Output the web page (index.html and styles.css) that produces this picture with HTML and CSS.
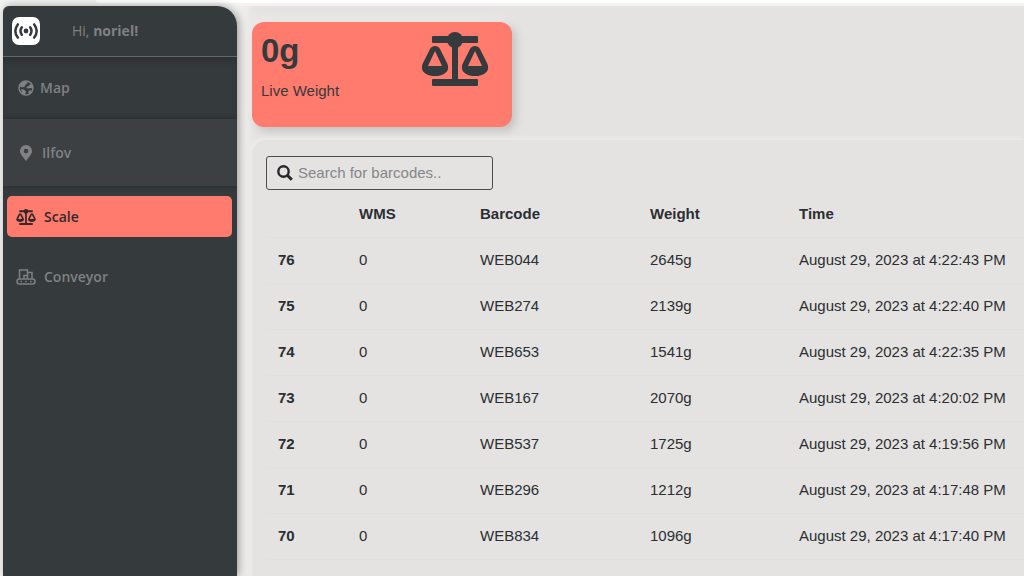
FILE: index.html
```
<!DOCTYPE html>
<html lang="en">
<head>
    <meta charset="UTF-8">
    <title>Scale</title>
    <link rel="stylesheet" href="styles.css">
</head>
<body>
<svg class="sprite" aria-hidden="true">
    <symbol id="balance" viewBox="0 0 68 54">
        <rect x="11" y="4" width="46" height="7" rx="1"/>
        <rect x="11" y="47" width="46" height="7" rx="1"/>
        <rect x="31" y="8" width="6" height="42"/>
        <circle cx="34" cy="8" r="8"/>
        <path fill-rule="evenodd" d="M14 14c2 0 4 1 5 3l7 14c4 8-3 13-12 13S-2 39 2 31l7-14c1-2 3-3 5-3zM14 19L7 34h14z"/>
        <path fill-rule="evenodd" d="M54 14c2 0 4 1 5 3l7 14c4 8-3 13-12 13s-16-5-12-13l7-14c1-2 3-3 5-3zM54 19l-7 15h14z"/>
    </symbol>
</svg>
<div class="topbar"><div class="tab"></div></div>
<div class="app">
    <aside class="sidebar">
        <header class="user">
            <svg class="logo" viewBox="0 0 28 28">
                <rect width="28" height="28" rx="7" fill="#fff"/>
                <circle cx="14" cy="14" r="2.4" fill="#35393d"/>
                <path d="M9.8 10.2Q7.2 14 9.8 17.8M18.2 10.2Q20.8 14 18.2 17.8M5.8 7.4Q0.8 14 5.8 20.6M22.2 7.4Q27.2 14 22.2 20.6" fill="none" stroke="#35393d" stroke-width="2.5" stroke-linecap="round"/>
            </svg>
            <p class="hello">Hi, <b>noriel!</b></p>
        </header>
        <nav class="menu">
            <a class="item map" href="#">
                <svg width="16" height="16" viewBox="0 0 16 16">
                    <circle cx="8" cy="8" r="7" fill="none" stroke="currentColor" stroke-width="1.4"/>
                    <path fill="currentColor" d="M8 1L10 3 7.500 4.500 7 6.500 4 7.500 2 6.500 1 9 1 5 4 2zM15 6L12.500 4 10.500 6 8 7.500 10 8.500 13 8 15 9zM3 9L6 9.500 8 11.500 7 15 4 13.500zM11 10.500L14 10.500 12 13.500 10 13.500z"/>
                </svg>
                Map
            </a>
            <a class="item place" href="#">
                <svg width="16" height="16" viewBox="0 0 16 16">
                    <path fill="currentColor" fill-rule="evenodd" d="M8 0a6 6 0 0 1 6 6c0 3-3 6-6 10C5 12 2 9 2 6a6 6 0 0 1 6-6zM8 3.800a2.300 2.300 0 1 0 0 4.600a2.300 2.300 0 0 0 0-4.600z"/>
                </svg>
                Ilfov
            </a>
            <a class="item active" href="#">
                <svg width="20" height="16" fill="currentColor"><use href="#balance"/></svg>
                Scale
            </a>
            <a class="item conveyor" href="#">
                <svg width="20" height="16" viewBox="0 0 20 16" fill="none" stroke="currentColor" stroke-width="1.500">
                    <path d="M3.500 9.500V1h8v8.500M11.500 3.500h4.500v6M8 9.500V6.500h3.500"/>
                    <rect x="1" y="10" width="18" height="5" rx="2.500"/>
                    <path d="M4.500 12.500h1.500M9.200 12.500h1.500M14 12.500h1.500"/>
                </svg>
                Conveyor
            </a>
        </nav>
    </aside>
    <main class="content">
        <section class="card">
            <div>
                <h1>0g</h1>
                <p>Live Weight</p>
            </div>
            <svg width="68" height="54"><use href="#balance"/></svg>
        </section>
        <section class="panel">
            <label class="search">
                <svg width="16" height="16" viewBox="0 0 16 16" fill="none" stroke="#24272b">
                    <circle cx="6.500" cy="6.500" r="5.200" stroke-width="2.400"/>
                    <path d="M10.300 10.300l4.500 4.500" stroke-width="3"/>
                </svg>
                <input type="search" placeholder="Search for barcodes.." aria-label="Search for barcodes">
            </label>
            <table>
                <thead>
                    <tr><th class="id"></th><th class="wms">WMS</th><th class="barcode">Barcode</th><th class="weight">Weight</th><th>Time</th></tr>
                </thead>
                <tbody>
                    <tr><th>76</th><td>0</td><td>WEB044</td><td>2645g</td><td>August 29, 2023 at 4:22:43 PM</td></tr>
                    <tr><th>75</th><td>0</td><td>WEB274</td><td>2139g</td><td>August 29, 2023 at 4:22:40 PM</td></tr>
                    <tr><th>74</th><td>0</td><td>WEB653</td><td>1541g</td><td>August 29, 2023 at 4:22:35 PM</td></tr>
                    <tr><th>73</th><td>0</td><td>WEB167</td><td>2070g</td><td>August 29, 2023 at 4:20:02 PM</td></tr>
                    <tr><th>72</th><td>0</td><td>WEB537</td><td>1725g</td><td>August 29, 2023 at 4:19:56 PM</td></tr>
                    <tr><th>71</th><td>0</td><td>WEB296</td><td>1212g</td><td>August 29, 2023 at 4:17:48 PM</td></tr>
                    <tr><th>70</th><td>0</td><td>WEB834</td><td>1096g</td><td>August 29, 2023 at 4:17:40 PM</td></tr>
                    <tr><th>69</th><td>0</td><td>WEB204</td><td>793g</td><td>August 29, 2023 at 4:17:37 PM</td></tr>
                </tbody>
            </table>
        </section>
    </main>
</div>
</body>
</html>
```
FILE: styles.css
```
*{
    box-sizing: border-box;
    margin: 0;
    padding: 0;
}
body{
    display: flex;
    flex-direction: column;
    height: 100vh;
    overflow: hidden;
    background: #f3f3f2;
    color: #2b2e32;
    font: 15px/22px "Liberation Sans", Arial, sans-serif;
}
.sprite{
    display: none;
}
.topbar{
    flex: none;
    height: 6px;
    padding-left: 96px;
}
.tab{
    height: 3px;
    background: #fff;
    border-bottom-left-radius: 4px;
}
.app{
    display: flex;
    flex: 1;
    min-height: 0;
    padding-left: 3px;
}
.sidebar{
    z-index: 1;
    flex: none;
    width: 234px;
    border-radius: 6px 20px 0 0;
    background: #353a3d;
    box-shadow: 2px 0 8px rgba(0, 0, 0, .35);
    color: #7f8182;
    font: 14px/22px "Open Sans", "Noto Sans", sans-serif;
    overflow: hidden;
}
.user{
    display: flex;
    align-items: center;
    gap: 32px;
    height: 51px;
    padding: 0 9px;
    border-bottom: 1px solid #66696c;
}
.logo{
    width: 28px;
    height: 28px;
}
.item{
    display: flex;
    align-items: center;
    gap: 8px;
    color: inherit;
    font-weight: 600;
    text-decoration: none;
}
.map{
    height: 62px;
    padding-left: 15px;
    box-shadow: inset 0 6px 8px -4px #292c30;
    gap: 6px;
}
.place{
    height: 67px;
    padding-left: 15px;
    background: #3c4043;
    box-shadow: 0 0 4px #222529;
}
.active{
    height: 41px;
    margin: 10px 5px 19px 4px;
    padding-left: 9px;
    border-radius: 5px;
    background: #ff7b6e;
    color: #35292a;
}
.conveyor{
    height: 42px;
    padding-left: 13px;
}
.content{
    flex: 1;
    min-width: 0;
    padding: 16px 0 0 15px;
    background: #e4e3e1;
    box-shadow: inset 18px 0 10px -6px #f0efed;
}
.card{
    display: flex;
    justify-content: space-between;
    width: 260px;
    height: 105px;
    padding: 10px 23px 0 9px;
    border-radius: 12px;
    background: #ff7b6e;
    box-shadow: 4px 4px 8px #c3c2c0, -4px -4px 8px #edecea;
    color: #353a3d;
    fill: #353a3d;
}
.card h1{
    margin-bottom: 10px;
    font-size: 33px;
    line-height: 38px;
}
.panel{
    margin-top: 13px;
    padding: 16px 0 0 14px;
    border-radius: 14px 0 0 0;
    background: #e4e3e1;
    box-shadow: -2px -2px 4px #edecea;
}
.search{
    display: flex;
    align-items: center;
    gap: 5px;
    width: 227px;
    height: 34px;
    margin-bottom: 1px;
    padding: 0 10px;
    border: 1px solid #4b4d50;
    border-radius: 3px;
}
.search input{
    flex: 1;
    min-width: 0;
    border: 0;
    outline: 0;
    background: none;
    font: inherit;
}
.search input::placeholder{
    color: #85868a;
}
table{
    width: 100%;
    border-collapse: collapse;
    table-layout: fixed;
}
th,td{
    height: 46px;
    padding: 0 0 0 12px;
    border-bottom: 1px solid #dfe0e1;
    text-align: left;
    white-space: nowrap;
}
.id{
    width: 81px;
}
.wms{
    width: 121px;
}
.barcode{
    width: 170px;
}
.weight{
    width: 149px;
}
```
